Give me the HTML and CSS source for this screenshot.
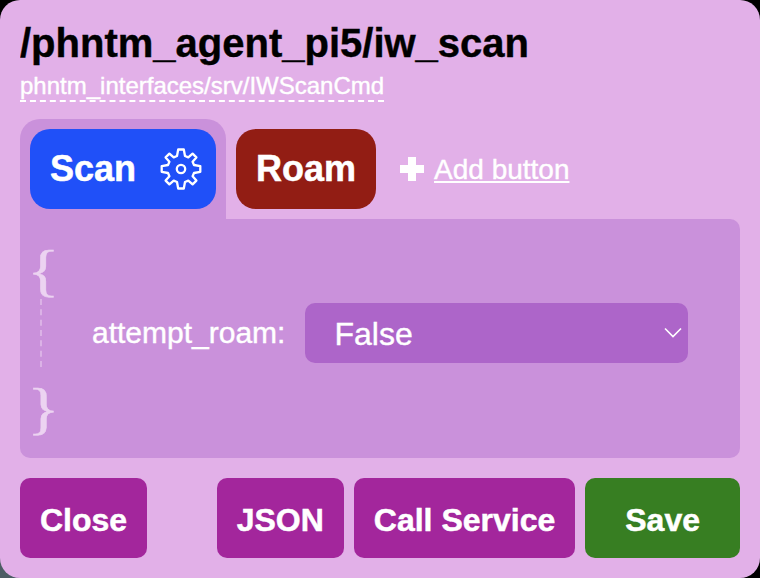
FILE: index.html
```
<!DOCTYPE html>
<html lang="en">
<head>
<meta charset="utf-8">
<title>Service editor</title>
<link rel="stylesheet" href="styles.css">
</head>
<body>
<main class="dialog">
  <h1 class="title">/phntm_agent_pi5/iw_scan</h1>
  <a class="type">phntm_interfaces/srv/IWScanCmd</a>
  <div class="tabs">
    <div class="tab">
      <button class="chip chip-scan">Scan
        <svg class="gear" viewBox="0 0 42 42" fill="none" stroke="#fff" stroke-width="2.3" stroke-linejoin="round"><path d="M17 8L18.2 1.5H23.8L25 8L28.3 9.4L32.6 5.6L36.4 9.4L32.6 13.7L34 17L40.3 18.2V23.8L34 25L32.6 28.3L36.4 32.6L32.6 36.4L28.3 32.6L25 34L23.8 40.5H18.2L17 34L13.7 32.6L9.4 36.4L5.6 32.6L9.4 28.3L8 25L1.7 23.8V18.2L8 17L9.4 13.7L5.6 9.4L9.4 5.6L13.7 9.4Z"/><circle cx="21" cy="21" r="4.2"/></svg>
      </button>
    </div>
    <button class="chip chip-roam">Roam</button>
    <div class="add"><svg class="plus" viewBox="0 0 24 24"><path fill="#fff" d="M8 0h8v8h8v8h-8v8H8v-8H0V8h8z"/></svg><a class="add-link">Add button</a></div>
  </div>
  <section class="panel">
    <div class="brace"><span class="glyph">{</span></div>
    <div class="fields">
      <label class="label">attempt_roam:</label>
      <div class="select"><span class="value">False</span>
        <svg class="chevron" viewBox="0 0 18 12" fill="none" stroke="#fff" stroke-width="1.6"><path d="M1 1.5L9 9.5L17 1.5"/></svg>
      </div>
    </div>
    <div class="brace brace-end"><span class="glyph">}</span></div>
  </section>
  <footer class="actions">
    <button class="action close">Close</button>
    <button class="action">JSON</button>
    <button class="action">Call Service</button>
    <button class="action save">Save</button>
  </footer>
</main>
</body>
</html>
```
FILE: styles.css
```
* { box-sizing: border-box; }
body {
  margin: 0;
  background: linear-gradient(90deg, #4c5d64 0 20px, #000 20px) 0 100% / 100% 20px no-repeat #000;
  font-family: "Liberation Sans", Arial, sans-serif;
  color: #fff;
  -webkit-text-stroke: 0.4px;
}
.dialog {
  width: 760px;
  height: 578px;
  padding: 20px;
  border-radius: 20px;
  background: #e2b0e8;
  display: flex;
  flex-direction: column;
}
.title {
  margin: 0;
  height: 48px;
  font-size: 40px;
  line-height: 46px;
  color: #000;
  overflow: hidden;
}
.type {
  align-self: flex-start;
  height: 34px;
  font-size: 24px;
  line-height: 36px;
  border-bottom: 2px dashed #fff;
}
.tabs {
  display: flex;
  height: 100px;
  margin-top: 17px;
}
.tab {
  padding: 10px;
  background: #ca91db;
  border-radius: 20px 20px 0 0;
}
button {
  border: 0;
  color: #fff;
  font-family: inherit;
  font-weight: bold;
  -webkit-text-stroke: 0.5px;
}
.chip {
  display: flex;
  align-items: center;
  height: 80px;
  padding: 0 20px;
  border-radius: 20px;
  font-size: 36px;
}
.chip-scan {
  width: 186px;
  padding-right: 14px;
  justify-content: space-between;
  background: #2050f8;
}
.chip-roam {
  margin: 10px 0 0 10px;
  background: #921d14;
}
.gear { width: 42px; height: 42px; margin-top: -1px; }
.add {
  display: flex;
  align-items: center;
  height: 80px;
  margin: 10px 0 0 24px;
  gap: 10px;
}
.plus { width: 24px; height: 24px; }
.add-link {
  padding-top: 2px;
  font-size: 28px;
  text-decoration: underline;
  text-decoration-thickness: 2px;
  text-underline-offset: 2px;
}
.panel {
  height: 239px;
  padding: 22px 52px 20px 10px;
  background: #ca91db;
  border-radius: 0 10px 10px 10px;
}
.brace {
  height: 58px;
  font-family: "Liberation Serif", serif;
  font-size: 56px;
  line-height: 60px;
  color: #ecd3f1;
}
.glyph {
  display: block;
  width: 27px;
  transform: scaleX(1.2);
}
.fields {
  display: flex;
  align-items: center;
  height: 68px;
  margin-left: 10px;
  padding-left: 50px;
  border-left: 2px dashed #dbb2e6;
}
.label { font-size: 30px; }
.select {
  display: flex;
  flex: 1;
  align-items: center;
  justify-content: space-between;
  height: 60px;
  margin-left: 20px;
  padding: 0 6px 0 29px;
  border-radius: 10px;
  background: #ad65c9;
  font-size: 32px;
}
.value { padding-top: 2px; }
.chevron { width: 18px; height: 12px; }
.brace-end { margin-top: 12px; }
.actions {
  display: flex;
  gap: 10px;
  margin-top: 20px;
}
.action {
  height: 80px;
  padding: 4px 20px 0;
  border-radius: 10px;
  background: #a3269c;
  font-size: 32px;
}
.close { margin-right: auto; }
.save {
  padding: 4px 40px 0;
  background: #377e22;
}
```
